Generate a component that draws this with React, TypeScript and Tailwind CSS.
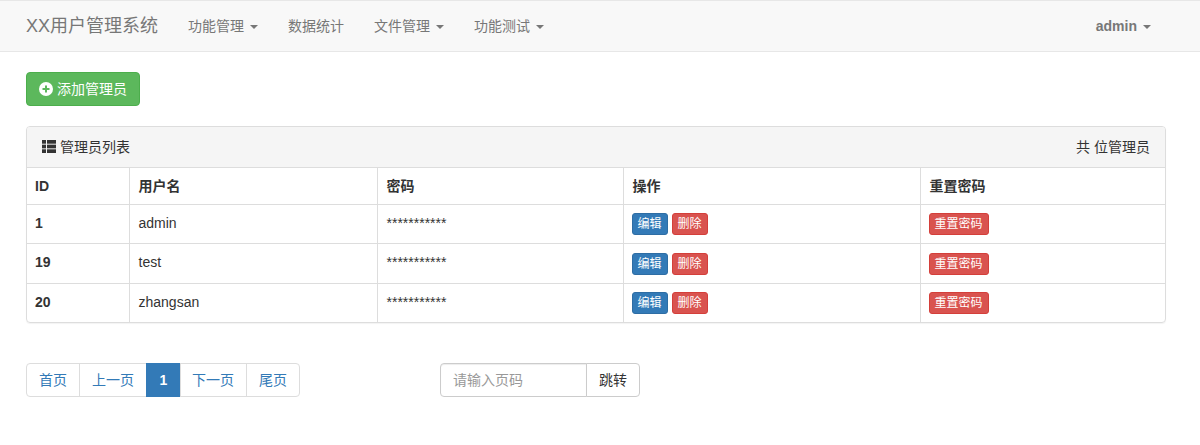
const font = "font-['Liberation_Sans','Noto_Sans_CJK_SC',sans-serif]";

const Caret = () => (
  <span className="ml-[6px] inline-block h-0 w-0 border-x-4 border-t-4 border-x-transparent border-t-[#777] align-middle" />
);

const PlusSign = () => (
  <svg width="14" height="14" viewBox="0 0 14 14" className="mr-[4px] mb-px shrink-0">
    <circle cx="7" cy="7" r="7" fill="#fff" />
    <path d="M6 3.5h2V6h2.5v2H8v2.5H6V8H3.5V6H6z" fill="#5cb85c" />
  </svg>
);

const ThList = () => (
  <svg width="14" height="13" viewBox="0 0 14 13" className="mr-[4px] mb-px shrink-0" fill="#333">
    <rect x="0" y="0" width="4" height="3.7" />
    <rect x="5" y="0" width="9" height="3.7" />
    <rect x="0" y="4.65" width="4" height="3.7" />
    <rect x="5" y="4.65" width="9" height="3.7" />
    <rect x="0" y="9.3" width="4" height="3.7" />
    <rect x="5" y="9.3" width="9" height="3.7" />
  </svg>
);

const navItems = [
  { label: "功能管理", caret: true },
  { label: "数据统计", caret: false },
  { label: "文件管理", caret: true },
  { label: "功能测试", caret: true },
];

// row 2 sits a pixel lower for its buttons, the source table has fractional heights
const rows = [
  { id: "1", name: "admin", height: "h-[39px]", btnPad: "pt-2" },
  { id: "19", name: "test", height: "h-[40px]", btnPad: "pt-[9px]" },
  { id: "20", name: "zhangsan", height: "h-[39px]", btnPad: "pt-2" },
];

const pages = [
  { label: "首页", className: "w-[54px] rounded-l border-[#ddd] text-[#337ab7]" },
  { label: "上一页", className: "w-[68px] border-[#ddd] text-[#337ab7]" },
  { label: "1", className: "w-[35px] border-[#337ab7] bg-[#337ab7] text-white font-bold" },
  { label: "下一页", className: "w-[67px] pr-px border-[#ddd] text-[#337ab7]" },
  { label: "尾页", className: "w-[54px] rounded-r border-[#ddd] text-[#337ab7]" },
];

const XsButton = ({ color, children }: { color: string; children: string }) => (
  <button className={`inline-block h-[22px] rounded-[3px] border px-[5px] text-xs leading-[20px] text-white ${color}`}>
    {children}
  </button>
);

export default function App() {
  return (
    <div className={`${font} h-[445px] bg-white text-sm leading-5 text-[#333]`}>
      <nav className="flex h-[52px] items-center border-y border-[#e7e7e7] bg-[#f8f8f8] pr-[34px] pl-[26px] text-[#777]">
        <span className="pr-[15px] text-lg">XX用户管理系统</span>
        {navItems.map((item) => (
          <span key={item.label} className="px-[15px]">
            {item.label}
            {item.caret && <Caret />}
          </span>
        ))}
        <span className="ml-auto px-[15px] font-bold">
          admin
          <Caret />
        </span>
      </nav>

      <main className="px-[26px] pt-[20px]">
        <button className="flex h-[34px] w-[114px] items-center justify-center rounded border border-[#4cae4c] bg-[#5cb85c] text-white">
          <PlusSign />
          添加管理员
        </button>

        <section className="mt-[20px] w-[1140px] overflow-hidden rounded border border-[#ddd] shadow-[0_1px_1px_rgba(0,0,0,0.05)]">
          <header className="flex h-[41px] items-center justify-between border-b border-[#ddd] bg-[#f5f5f5] px-[15px]">
            <span className="flex items-center">
              <ThList />
              管理员列表
            </span>
            <span>共 位管理员</span>
          </header>
          <table className="w-full table-fixed border-collapse">
            <colgroup>
              <col className="w-[102px]" />
              <col className="w-[248px]" />
              <col className="w-[246px]" />
              <col className="w-[297px]" />
              <col />
            </colgroup>
            <thead>
              <tr className="h-[36px] text-left font-bold">
                <th className="border-r border-[#ddd] px-2">ID</th>
                <th className="border-r border-[#ddd] pr-2 pl-[9px]">用户名</th>
                <th className="border-r border-[#ddd] pr-2 pl-[9px]">密码</th>
                <th className="border-r border-[#ddd] pr-2 pl-[9px]">操作</th>
                <th className="pr-2 pl-[9px]">重置密码</th>
              </tr>
            </thead>
            <tbody>
              {rows.map((row) => (
                <tr key={row.id} className={`${row.height} border-t border-[#ddd]`}>
                  <td className="border-r border-[#ddd] px-2 pt-2 align-top font-bold">{row.id}</td>
                  <td className="border-r border-[#ddd] pt-2 pr-2 pl-[9px] align-top">{row.name}</td>
                  <td className="border-r border-[#ddd] pt-2 pr-2 pl-[9px] align-top">***********</td>
                  <td className={`border-r border-[#ddd] px-2 align-top ${row.btnPad}`}>
                    <div className="flex gap-[4px]">
                      <XsButton color="border-[#2e6da4] bg-[#337ab7]">编辑</XsButton>
                      <XsButton color="border-[#d43f3a] bg-[#d9534f]">删除</XsButton>
                    </div>
                  </td>
                  <td className={`px-2 align-top ${row.btnPad}`}>
                    <XsButton color="border-[#d43f3a] bg-[#d9534f]">重置密码</XsButton>
                  </td>
                </tr>
              ))}
            </tbody>
          </table>
        </section>

        <div className="mt-[40px] flex">
          <div className="flex w-[414px]">
            {pages.map((page) => (
              <a
                key={page.label}
                className={`-ml-px flex h-[34px] items-center justify-center border first:ml-0 ${page.className}`}
              >
                {page.label}
              </a>
            ))}
          </div>
          <div className="flex h-[34px] w-[200px]">
            <input
              placeholder="请输入页码"
              className="w-[147px] rounded-l border border-[#ccc] px-3 text-sm text-[#555] shadow-[inset_0_1px_1px_rgba(0,0,0,0.075)] outline-none placeholder:text-[#999]"
            />
            <button className="-ml-px flex-1 rounded-r border border-[#ccc] bg-white text-[#333]">跳转</button>
          </div>
        </div>
      </main>
    </div>
  );
}
